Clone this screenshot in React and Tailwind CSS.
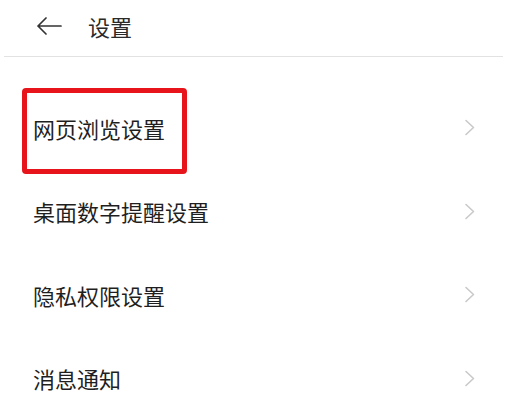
import React from 'react';

const items = ['网页浏览设置', '桌面数字提醒设置', '隐私权限设置', '消息通知'];

function Chevron() {
  return (
    <svg width="12" height="17" viewBox="0 0 12 17" fill="none" className="shrink-0">
      <path d="M2 1.5 L9.5 8.5 L2 15.5" stroke="#c9c9c9" strokeWidth="1.6" strokeLinecap="round" strokeLinejoin="round" />
    </svg>
  );
}

export default function App() {
  return (
    <div
      className="relative w-[507px] h-[416px] overflow-hidden bg-white text-[#1f1f1f]"
      style={{ fontFamily: '"Noto Sans CJK SC", "Noto Sans", sans-serif' }}
    >
      {/* 顶部标题栏 */}
      <div className="mx-[4px] h-[57px] pb-[4px] flex items-center border-b border-[#e2e2e2]">
        <div className="ml-[32px] w-[26px] flex items-center">
          <svg width="26" height="18" viewBox="0 0 26 18" fill="none">
            <path d="M25 9 H2 M10 1 L2 9 L10 17" stroke="#333" strokeWidth="1.7" strokeLinecap="round" strokeLinejoin="round" />
          </svg>
        </div>
        <span className="ml-[26px] text-[22px] leading-none text-[#2a2a2a]">设置</span>
      </div>

      {/* 设置列表 */}
      <div className="pt-[29px]">
        {items.map((item) => (
          <div key={item} className="h-[83.5px] flex items-center justify-between pl-[33px] pr-[31px]">
            <span className="text-[22px] leading-none">{item}</span>
            <Chevron />
          </div>
        ))}
      </div>

      {/* 红框标注 */}
      <div className="absolute left-[22px] top-[88px] w-[165px] h-[86px] border-[5px] border-[#e8141c] rounded-[4px]"></div>
    </div>
  );
}
